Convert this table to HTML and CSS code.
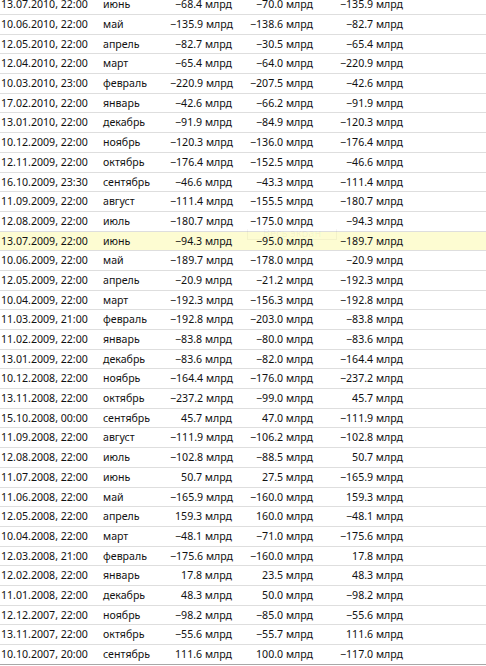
FILE: index.html
```html
<!DOCTYPE html>
<html lang="ru">
<head>
<meta charset="utf-8">
<title>Календарь</title>
<link rel="stylesheet" href="styles.css">
</head>
<body>
<div class="table">
<div class="row"><span class="date">13.07.2010, 22:00</span><span class="month">июнь</span><span class="num">−68.4 млрд</span><span class="num">−70.0 млрд</span><span class="num">−135.9 млрд</span><span></span></div>
<div class="row"><span class="date">10.06.2010, 22:00</span><span class="month">май</span><span class="num">−135.9 млрд</span><span class="num">−138.6 млрд</span><span class="num">−82.7 млрд</span><span></span></div>
<div class="row"><span class="date">12.05.2010, 22:00</span><span class="month">апрель</span><span class="num">−82.7 млрд</span><span class="num">−30.5 млрд</span><span class="num">−65.4 млрд</span><span></span></div>
<div class="row"><span class="date">12.04.2010, 22:00</span><span class="month">март</span><span class="num">−65.4 млрд</span><span class="num">−64.0 млрд</span><span class="num">−220.9 млрд</span><span></span></div>
<div class="row"><span class="date">10.03.2010, 23:00</span><span class="month">февраль</span><span class="num">−220.9 млрд</span><span class="num">−207.5 млрд</span><span class="num">−42.6 млрд</span><span></span></div>
<div class="row"><span class="date">17.02.2010, 22:00</span><span class="month">январь</span><span class="num">−42.6 млрд</span><span class="num">−66.2 млрд</span><span class="num">−91.9 млрд</span><span></span></div>
<div class="row"><span class="date">13.01.2010, 22:00</span><span class="month">декабрь</span><span class="num">−91.9 млрд</span><span class="num">−84.9 млрд</span><span class="num">−120.3 млрд</span><span></span></div>
<div class="row"><span class="date">10.12.2009, 22:00</span><span class="month">ноябрь</span><span class="num">−120.3 млрд</span><span class="num">−136.0 млрд</span><span class="num">−176.4 млрд</span><span></span></div>
<div class="row"><span class="date">12.11.2009, 22:00</span><span class="month">октябрь</span><span class="num">−176.4 млрд</span><span class="num">−152.5 млрд</span><span class="num">−46.6 млрд</span><span></span></div>
<div class="row"><span class="date">16.10.2009, 23:30</span><span class="month">сентябрь</span><span class="num">−46.6 млрд</span><span class="num">−43.3 млрд</span><span class="num">−111.4 млрд</span><span></span></div>
<div class="row"><span class="date">11.09.2009, 22:00</span><span class="month">август</span><span class="num">−111.4 млрд</span><span class="num">−155.5 млрд</span><span class="num">−180.7 млрд</span><span></span></div>
<div class="row"><span class="date">12.08.2009, 22:00</span><span class="month">июль</span><span class="num">−180.7 млрд</span><span class="num">−175.0 млрд</span><span class="num">−94.3 млрд</span><span></span></div>
<div class="row hl"><span class="date">13.07.2009, 22:00</span><span class="month">июнь</span><span class="num">−94.3 млрд</span><span class="num">−95.0 млрд</span><span class="num">−189.7 млрд</span><span></span><span class="ghost">Весь экран</span></div>
<div class="row"><span class="date">10.06.2009, 22:00</span><span class="month">май</span><span class="num">−189.7 млрд</span><span class="num">−178.0 млрд</span><span class="num">−20.9 млрд</span><span></span></div>
<div class="row"><span class="date">12.05.2009, 22:00</span><span class="month">апрель</span><span class="num">−20.9 млрд</span><span class="num">−21.2 млрд</span><span class="num">−192.3 млрд</span><span></span></div>
<div class="row"><span class="date">10.04.2009, 22:00</span><span class="month">март</span><span class="num">−192.3 млрд</span><span class="num">−156.3 млрд</span><span class="num">−192.8 млрд</span><span></span></div>
<div class="row"><span class="date">11.03.2009, 21:00</span><span class="month">февраль</span><span class="num">−192.8 млрд</span><span class="num">−203.0 млрд</span><span class="num">−83.8 млрд</span><span></span></div>
<div class="row"><span class="date">11.02.2009, 22:00</span><span class="month">январь</span><span class="num">−83.8 млрд</span><span class="num">−80.0 млрд</span><span class="num">−83.6 млрд</span><span></span></div>
<div class="row"><span class="date">13.01.2009, 22:00</span><span class="month">декабрь</span><span class="num">−83.6 млрд</span><span class="num">−82.0 млрд</span><span class="num">−164.4 млрд</span><span></span></div>
<div class="row"><span class="date">10.12.2008, 22:00</span><span class="month">ноябрь</span><span class="num">−164.4 млрд</span><span class="num">−176.0 млрд</span><span class="num">−237.2 млрд</span><span></span></div>
<div class="row"><span class="date">13.11.2008, 22:00</span><span class="month">октябрь</span><span class="num">−237.2 млрд</span><span class="num">−99.0 млрд</span><span class="num">45.7 млрд</span><span></span></div>
<div class="row"><span class="date">15.10.2008, 00:00</span><span class="month">сентябрь</span><span class="num">45.7 млрд</span><span class="num">47.0 млрд</span><span class="num">−111.9 млрд</span><span></span></div>
<div class="row"><span class="date">11.09.2008, 22:00</span><span class="month">август</span><span class="num">−111.9 млрд</span><span class="num">−106.2 млрд</span><span class="num">−102.8 млрд</span><span></span></div>
<div class="row"><span class="date">12.08.2008, 22:00</span><span class="month">июль</span><span class="num">−102.8 млрд</span><span class="num">−88.5 млрд</span><span class="num">50.7 млрд</span><span></span></div>
<div class="row"><span class="date">11.07.2008, 22:00</span><span class="month">июнь</span><span class="num">50.7 млрд</span><span class="num">27.5 млрд</span><span class="num">−165.9 млрд</span><span></span></div>
<div class="row"><span class="date">11.06.2008, 22:00</span><span class="month">май</span><span class="num">−165.9 млрд</span><span class="num">−160.0 млрд</span><span class="num">159.3 млрд</span><span></span></div>
<div class="row"><span class="date">12.05.2008, 22:00</span><span class="month">апрель</span><span class="num">159.3 млрд</span><span class="num">160.0 млрд</span><span class="num">−48.1 млрд</span><span></span></div>
<div class="row"><span class="date">10.04.2008, 22:00</span><span class="month">март</span><span class="num">−48.1 млрд</span><span class="num">−71.0 млрд</span><span class="num">−175.6 млрд</span><span></span></div>
<div class="row"><span class="date">12.03.2008, 21:00</span><span class="month">февраль</span><span class="num">−175.6 млрд</span><span class="num">−160.0 млрд</span><span class="num">17.8 млрд</span><span></span></div>
<div class="row"><span class="date">12.02.2008, 22:00</span><span class="month">январь</span><span class="num">17.8 млрд</span><span class="num">23.5 млрд</span><span class="num">48.3 млрд</span><span></span></div>
<div class="row"><span class="date">11.01.2008, 22:00</span><span class="month">декабрь</span><span class="num">48.3 млрд</span><span class="num">50.0 млрд</span><span class="num">−98.2 млрд</span><span></span></div>
<div class="row"><span class="date">12.12.2007, 22:00</span><span class="month">ноябрь</span><span class="num">−98.2 млрд</span><span class="num">−85.0 млрд</span><span class="num">−55.6 млрд</span><span></span></div>
<div class="row"><span class="date">13.11.2007, 22:00</span><span class="month">октябрь</span><span class="num">−55.6 млрд</span><span class="num">−55.7 млрд</span><span class="num">111.6 млрд</span><span></span></div>
<div class="row last"><span class="date">10.10.2007, 20:00</span><span class="month">сентябрь</span><span class="num">111.6 млрд</span><span class="num">100.0 млрд</span><span class="num">−117.0 млрд</span><span></span></div>
</div>
</body>
</html>
```
FILE: styles.css
```css
html, body {
  margin: 0;
  padding: 0;
  background: #ffffff;
}
body {
  font-family: "Noto Sans", "Liberation Sans", sans-serif;
  font-size: 10.6px;
  color: #111111;
  overflow: hidden;
}
.table {
  width: 486px;
  margin-top: -4.7px;
}
.row {
  position: relative;
  display: grid;
  grid-template-columns: 103px 67px 62px 81px 90px 1fr;
  align-items: center;
  height: 18.697px;
  border-bottom: 1px solid #dedede;
  white-space: nowrap;
  line-height: 1;
}
.row.last {
  border-bottom-color: #a8a8a8;
}
.row.hl {
  background: #fdfcd2;
}
.date {
  padding-left: 1px;
}
.num {
  text-align: right;
}
.ghost {
  position: absolute;
  left: 247px;
  top: -3px;
  width: 88px;
  height: 10px;
  border: 1px solid rgba(0, 0, 0, 0.04);
  border-top: none;
  color: rgba(0, 0, 0, 0.05);
  text-align: center;
  line-height: 8px;
  font-size: 11px;
  overflow: hidden;
}
```
